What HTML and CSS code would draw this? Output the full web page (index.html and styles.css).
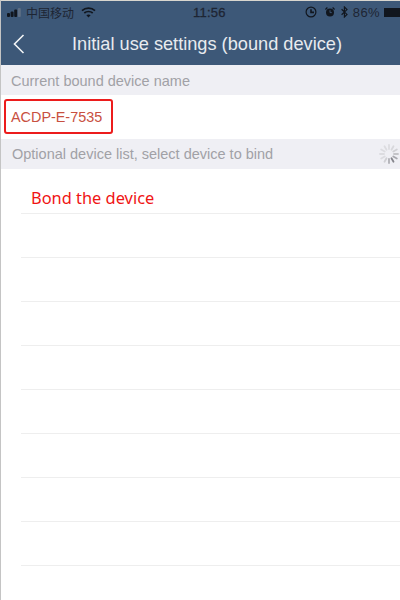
FILE: index.html

```html
<html lang="en">
<head>
  <meta charset="UTF-8">
  <title>Initial use settings</title>
  <link rel="stylesheet" href="styles.css">
</head>
<body>
  <div class="screen">
    <div class="header">
      <div class="status">
        <div class="status-left">
          <svg class="signal" width="16" height="9" viewBox="0 0 16 9">
            <rect x="0" y="5" width="3" height="4" rx="1" fill="#11161e"/>
            <rect x="3.6" y="3.5" width="3" height="5.5" rx="1" fill="#11161e"/>
            <rect x="7.2" y="1.5" width="3" height="7.5" rx="1" fill="#11161e"/>
            <rect x="10.8" y="0" width="3" height="9" rx="1" fill="#5f6f84"/>
          </svg>
          <span class="carrier">中国移动</span>
          <svg class="wifi" width="15" height="11" viewBox="0 0 15 11">
            <path d="M1 3.6C4.6 .4 10.4 .4 14 3.6" fill="none" stroke="#11161e" stroke-width="1.7"/>
            <path d="M3.3 6C5.6 4 9.4 4 11.7 6" fill="none" stroke="#11161e" stroke-width="1.7"/>
            <path d="M5.4 8.2C6.6 7.2 8.4 7.2 9.6 8.2L7.5 10.6Z" fill="#11161e"/>
          </svg>
        </div>
        <div class="time">11:56</div>
        <div class="status-right">
          <svg class="lock" width="12" height="12" viewBox="0 0 12 12">
            <circle cx="6" cy="6" r="4.9" fill="none" stroke="#11161e" stroke-width="1.2"/>
            <path d="M6 3.2V6.4H9" fill="none" stroke="#11161e" stroke-width="1.6"/>
          </svg>
          <svg class="alarm" width="10" height="10" viewBox="0 0 10 10">
            <circle cx="5" cy="5.4" r="4" fill="#11161e"/>
            <path d="M0.4 2.4L2.4 .6M9.6 2.4L7.6 .6" stroke="#11161e" stroke-width="1.3"/>
            <path d="M5 3.2V5.6H6.8" fill="none" stroke="#3d5878" stroke-width=".9"/>
          </svg>
          <svg class="bt" width="7" height="12" viewBox="0 0 7 12">
            <path d="M.6 3.2L6 8.4 3.4 11V1L6 3.6.6 8.8" fill="none" stroke="#11161e" stroke-width="1.2"/>
          </svg>
          <span class="percent">86%</span>
          <div class="battery"></div>
        </div>
      </div>
      <div class="nav">
        <svg class="back" width="12" height="20" viewBox="0 0 12 20">
          <path d="M10.5 1L1.5 10L10.5 19" fill="none" stroke="#f2f4f6" stroke-width="1.6"/>
        </svg>
        <div class="title">Initial use settings (bound device)</div>
      </div>
    </div>

    <div class="section-label">Current bound device name</div>
    <div class="current">
      <div class="device-box">ACDP-E-7535</div>
    </div>
    <div class="section-label list-label">
      <span>Optional device list, select device to bind</span>
      <svg class="spinner" width="20" height="20" viewBox="0 0 20 20">
        <g stroke-width="1.8" stroke-linecap="round">
          <path d="M10 1V5" stroke="#dcdce0"/>
          <path d="M14.5 2.2L12.5 5.7" stroke="#d8d8dc"/>
          <path d="M17.8 5.5L14.3 7.5" stroke="#d0d0d4"/>
          <path d="M19 10H15" stroke="#c4c4c8"/>
          <path d="M17.8 14.5L14.3 12.5" stroke="#a8a8ae"/>
          <path d="M14.5 17.8L12.5 14.3" stroke="#85858c"/>
          <path d="M10 19V15" stroke="#b0b0b6"/>
          <path d="M5.5 17.8L7.5 14.3" stroke="#d0d0d4"/>
          <path d="M2.2 14.5L5.7 12.5" stroke="#dcdce0"/>
          <path d="M1 10H5" stroke="#dcdce0"/>
          <path d="M2.2 5.5L5.7 7.5" stroke="#dcdce0"/>
          <path d="M5.5 2.2L7.5 5.7" stroke="#dcdce0"/>
        </g>
      </svg>
    </div>

    <div class="list">
      <div class="row row-first"><span class="note">Bond the device</span></div>
      <div class="row"></div>
      <div class="row"></div>
      <div class="row"></div>
      <div class="row"></div>
      <div class="row"></div>
      <div class="row"></div>
      <div class="row"></div>
      <div class="row"></div>
    </div>
  </div>
</body>
</html>
```

FILE: styles.css

```css
html, body {
  margin: 0;
  padding: 0;
  background: #fff;
}

.screen {
  width: 400px;
  height: 600px;
  overflow: hidden;
  box-sizing: border-box;
  border-left: 1px solid #c4c4c4;
  font-family: "Liberation Sans", Arial, sans-serif;
}

.header {
  height: 65px;
  box-sizing: border-box;
  background: #3d5878;
  border-top: 1px solid #d9d6cf;
}

.status {
  height: 22px;
  display: flex;
  align-items: center;
  justify-content: space-between;
  color: #1d2533;
  font-size: 12px;
  position: relative;
}

.status-left {
  display: flex;
  align-items: center;
  padding-left: 6px;
  gap: 3px;
}

.carrier {
  font-family: "Noto Sans CJK SC", sans-serif;
  font-size: 12px;
  margin-right: 4px;
}

.time {
  position: absolute;
  left: 192px;
  top: 4px;
  font-size: 13px;
  letter-spacing: .2px;
  -webkit-text-stroke: .3px #1d2533;
}

.status-right {
  display: flex;
  align-items: center;
  gap: 5px;
}

.lock {
  margin-right: 3px;
}

.bt {
  margin: 0 1px;
}

.percent {
  font-size: 13px;
  letter-spacing: .4px;
  margin-left: -1px;
  margin-right: -1px;
}

.battery {
  width: 16px;
  height: 9px;
  background: #11161e;
}

.nav {
  height: 42px;
  display: flex;
  align-items: center;
  position: relative;
}

.back {
  margin-left: 12px;
}

.title {
  margin-left: 47px;
  font-size: 18.2px;
  color: #e8ebef;
  white-space: nowrap;
}

.section-label {
  height: 30px;
  line-height: 32px;
  background: #efeff4;
  color: #a1a1a6;
  font-size: 14.5px;
  padding-left: 10px;
}

.list-label {
  display: flex;
  align-items: center;
  justify-content: space-between;
  padding-left: 11px;
  padding-right: 1px;
}

.current {
  height: 44px;
  box-sizing: border-box;
  padding-top: 4px;
  background: #fff;
}

.device-box {
  width: 109px;
  height: 35px;
  margin-left: 3px;
  box-sizing: border-box;
  border: 2px solid #ec1c1c;
  border-radius: 3px;
  color: #c8503f;
  font-size: 14.4px;
  line-height: 33px;
  padding-left: 5px;
}

.list {
  padding-left: 20px;
}

.row {
  height: 43px;
  border-bottom: 1px solid #eeeeee;
}

.row-first {
  height: 44px;
}

.note {
  display: block;
  padding: 19px 0 0 10px;
  color: #f01414;
  font-family: "Noto Sans", sans-serif;
  font-size: 16.4px;
  line-height: 20px;
}
```
